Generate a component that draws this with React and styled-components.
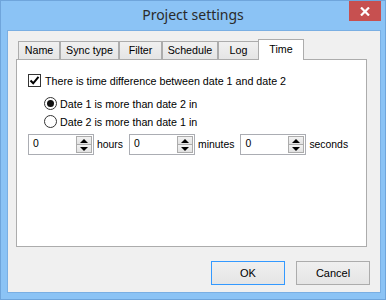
import React from 'react';
import styled, { createGlobalStyle } from 'styled-components';

const GlobalStyle = createGlobalStyle`
  html, body {
    margin: 0;
    padding: 0;
    background: #ffffff;
  }
  * {
    box-sizing: border-box;
  }
`;

const Window = styled.div`
  width: 386px;
  height: 300px;
  border: 1px solid #6fa5db;
  background: #8bc3f5;
  display: flex;
  flex-direction: column;
  font-family: 'Liberation Sans', Arial, sans-serif;
`;

const TitleBar = styled.div`
  height: 29px;
  display: grid;
  grid-template-columns: 1fr auto 1fr;
  align-items: start;
`;

const Title = styled.div`
  grid-column: 2;
  font-family: 'Noto Sans', 'Liberation Sans', sans-serif;
  font-size: 14px;
  line-height: 28px;
  color: #2a2a2a;
`;

const CloseButton = styled.div`
  grid-column: 3;
  justify-self: end;
  width: 32px;
  height: 20px;
  margin-right: 4px;
  background: #c75050;
  display: flex;
  align-items: center;
  justify-content: center;
`;

const Client = styled.div`
  flex: 1;
  margin: 0 4px 6px 6px;
  border: 1px solid #7aafe3;
  background: #f0f0f0;
  padding: 8px 10px 0 8px;
  display: flex;
  flex-direction: column;
`;

const TabControl = styled.div`
  width: 351px;
  display: flex;
  flex-direction: column;
`;

const TabStrip = styled.div`
  height: 20px;
  padding-left: 2px;
  display: flex;
  align-items: flex-end;
  position: relative;
  z-index: 1;
`;

const Tab = styled.div`
  width: ${p => p.w}px;
  height: ${p => (p.active ? 21 : 18)}px;
  margin-bottom: ${p => (p.active ? -1 : 0)}px;
  margin-left: ${p => (p.active ? -1 : 0)}px;
  border: 1px solid #acacac;
  border-bottom: none;
  background: ${p => (p.active ? '#ffffff' : 'linear-gradient(#f0f0f0, #e5e5e5)')};
  font-size: 10.7px;
  color: #000;
  text-align: center;
  line-height: ${p => (p.active ? 15 : 17)}px;
  padding-top: ${p => (p.active ? 2 : 0)}px;
`;

const Pane = styled.div`
  height: 188px;
  border: 1px solid #acacac;
  background: #ffffff;
  padding: 14px 0 0 11px;
  display: flex;
  flex-direction: column;
`;

const OptionRow = styled.div`
  display: flex;
  align-items: center;
  height: 13px;
  margin-top: ${p => p.top || 0}px;
  padding-left: ${p => p.indent || 0}px;
  font-size: 10.7px;
  color: #000;
  white-space: nowrap;
`;

const Box = styled.div`
  width: 13px;
  height: 13px;
  border: 1px solid #333;
  background: #fff;
  display: flex;
  align-items: center;
  justify-content: center;
  margin-right: 4px;
  flex: none;
`;

const Radio = styled.div`
  width: 13px;
  height: 13px;
  border: 1px solid #333;
  border-radius: 50%;
  background: #fff;
  display: flex;
  align-items: center;
  justify-content: center;
  margin-right: 3px;
  flex: none;

  &::after {
    content: '';
    width: 7px;
    height: 7px;
    border-radius: 50%;
    background: ${p => (p.checked ? '#111' : 'transparent')};
  }
`;

const SpinRow = styled.div`
  display: flex;
  align-items: center;
  margin-top: 6px;
  font-size: 10.4px;
  color: #000;
`;

const Spinner = styled.div`
  width: 66px;
  height: 21px;
  border: 1px solid #abadb3;
  background: #fff;
  display: flex;
  padding: 1px;
`;

const SpinValue = styled.div`
  flex: 1;
  padding: 1px 0 0 3px;
  line-height: 13px;
`;

const SpinArrows = styled.div`
  width: 16px;
  display: flex;
  flex-direction: column;
`;

const ArrowButton = styled.div`
  flex: 1;
  border: 1px solid #acacac;
  background: linear-gradient(#f2f2f2, #e2e2e2);
  display: flex;
  align-items: center;
  justify-content: center;
  & + & {
    margin-top: -1px;
  }
`;

const Triangle = styled.div`
  width: 0;
  height: 0;
  border-left: 4px solid transparent;
  border-right: 4px solid transparent;
  ${p => (p.down ? 'border-top: 4px solid #000;' : 'border-bottom: 4px solid #000;')}
`;

const UnitLabel = styled.span`
  margin: 0 6px 0 3px;
`;

const ButtonRow = styled.div`
  display: flex;
  justify-content: flex-end;
  gap: 11px;
  margin-top: 14px;
`;

const Button = styled.div`
  width: 74px;
  height: 24px;
  border: 1px solid ${p => (p.primary ? '#3399ff' : '#acacac')};
  background: linear-gradient(#f0f0f0, #e5e5e5);
  font-size: 11px;
  color: #000;
  display: flex;
  align-items: center;
  justify-content: center;
`;

const tabs = [
  { label: 'Name', w: 42 },
  { label: 'Sync type', w: 59 },
  { label: 'Filter', w: 43 },
  { label: 'Schedule', w: 56 },
  { label: 'Log', w: 41 },
  { label: 'Time', w: 46, active: true },
];

function SpinBox({ value }) {
  return (
    <Spinner>
      <SpinValue>{value}</SpinValue>
      <SpinArrows>
        <ArrowButton><Triangle /></ArrowButton>
        <ArrowButton><Triangle down /></ArrowButton>
      </SpinArrows>
    </Spinner>
  );
}

export default function App() {
  return (
    <>
      <GlobalStyle />
      <Window>
        <TitleBar>
          <Title>Project settings</Title>
          <CloseButton>
            <svg width="10" height="9" viewBox="0 0 10 9">
              <path d="M1 0.5 L9 8.5 M9 0.5 L1 8.5" stroke="#fff" strokeWidth="2.2" />
            </svg>
          </CloseButton>
        </TitleBar>
        <Client>
          <TabControl>
            <TabStrip>
              {tabs.map(t => (
                <Tab key={t.label} w={t.w} active={t.active}>
                  {t.label}
                </Tab>
              ))}
            </TabStrip>
            <Pane>
              <OptionRow>
                <Box>
                  <svg width="11" height="11" viewBox="0 0 11 11">
                    <path d="M1.5 5.5 L4.2 8.3 L9.5 1.8" fill="none" stroke="#000" strokeWidth="2" />
                  </svg>
                </Box>
                There is time difference between date 1 and date 2
              </OptionRow>
              <OptionRow top={10} indent={16}>
                <Radio checked />
                Date 1 is more than date 2 in
              </OptionRow>
              <OptionRow top={5} indent={16}>
                <Radio />
                Date 2 is more than date 1 in
              </OptionRow>
              <SpinRow>
                <SpinBox value="0" />
                <UnitLabel>hours</UnitLabel>
                <SpinBox value="0" />
                <UnitLabel>minutes</UnitLabel>
                <SpinBox value="0" />
                <UnitLabel>seconds</UnitLabel>
              </SpinRow>
            </Pane>
          </TabControl>
          <ButtonRow>
            <Button primary>OK</Button>
            <Button>Cancel</Button>
          </ButtonRow>
        </Client>
      </Window>
    </>
  );
}
